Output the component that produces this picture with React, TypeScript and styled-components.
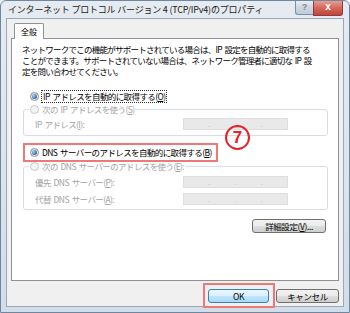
import React from 'react'
import styled, { createGlobalStyle } from 'styled-components'

const jp = `"Noto Sans CJK JP", "Noto Sans", sans-serif`

const GlobalStyle = createGlobalStyle`
  html, body {
    margin: 0;
    padding: 0;
    background: #ffffff;
  }
  body {
    font-family: ${jp};
  }
`

export default function App() {
  return (
    <>
      <GlobalStyle />
      <Window>
        <TitleBar>
          <Title>インターネット プロトコル バージョン 4 (TCP/IPv4)のプロパティ</Title>
          <Caption>
            <HelpButton>?</HelpButton>
            <CloseButton>x</CloseButton>
          </Caption>
        </TitleBar>

        <Client>
          <TabStrip>
            <Tab>全般</Tab>
          </TabStrip>

          <Panel>
            <Desc>
              ネットワークでこの機能がサポートされている場合は、IP 設定を自動的に取得する
              <br />
              ことができます。サポートされていない場合は、ネットワーク管理者に適切な IP 設
              <br />
              定を問い合わせてください。
            </Desc>

            <RadioRow $top={13}>
              <RadioDot $checked />
              <Focus>IP アドレスを自動的に取得する(<u>O</u>)</Focus>
            </RadioRow>

            <Group $top={1}>
              <Legend>
                <RadioRow $top={0} $inLegend $disabled>
                  <RadioDot $disabled />
                  <span>次の IP アドレスを使う(<u>S</u>)</span>
                </RadioRow>
              </Legend>
              <GroupBody $padTop={3} $padBottom={5}>
                <FieldLine>
                  <FieldLabel>IP アドレス(<u>I</u>):</FieldLabel>
                  <IpField>
                    <IpDot>.</IpDot>
                    <IpDot>.</IpDot>
                    <IpDot>.</IpDot>
                  </IpField>
                </FieldLine>
              </GroupBody>
            </Group>

            <RadioRow $top={10}>
              <RadioDot $checked />
              <span>DNS サーバーのアドレスを自動的に取得する(<u>B</u>)</span>
              <Highlight $inset="-3px -6px -4px -7px" />
            </RadioRow>

            <Group $top={2}>
              <Legend>
                <RadioRow $top={0} $inLegend $disabled>
                  <RadioDot $disabled />
                  <span>次の DNS サーバーのアドレスを使う(<u>E</u>):</span>
                </RadioRow>
              </Legend>
              <GroupBody $padTop={4} $padBottom={4}>
                <FieldLine>
                  <FieldLabel>優先 DNS サーバー(<u>P</u>):</FieldLabel>
                  <IpField>
                    <IpDot>.</IpDot>
                    <IpDot>.</IpDot>
                    <IpDot>.</IpDot>
                  </IpField>
                </FieldLine>
                <FieldLine>
                  <FieldLabel>代替 DNS サーバー(<u>A</u>):</FieldLabel>
                  <IpField>
                    <IpDot>.</IpDot>
                    <IpDot>.</IpDot>
                    <IpDot>.</IpDot>
                  </IpField>
                </FieldLine>
              </GroupBody>
            </Group>

            <DetailButton>詳細設定(<u>V</u>)...</DetailButton>

            <StepBadge>7</StepBadge>
          </Panel>

          <ButtonRow>
            <Marked>
              <Button $default $width={61}>OK</Button>
              <Highlight $inset="-6px -6px -5px -5px" />
            </Marked>
            <Button $width={63}>キャンセル</Button>
          </ButtonRow>
        </Client>
      </Window>
    </>
  )
}

const Window = styled.div`
  width: 350px;
  height: 313px;
  box-sizing: border-box;
  display: flex;
  flex-direction: column;
  padding: 0 5px 5px;
  background: linear-gradient(#e6ebf1, #d3dde8);
  border: 1px solid #6f86a0;
  border-radius: 6px 6px 0 0;
  overflow: hidden;
`

const TitleBar = styled.div`
  height: 17px;
  flex-shrink: 0;
  display: flex;
  align-items: flex-start;
`

const Title = styled.div`
  flex: 1;
  padding-left: 2px;
  font-family: ${jp};
  font-size: 9px;
  line-height: 18px;
  letter-spacing: -0.2px;
  color: #1a1a1a;
  white-space: nowrap;
`

const Caption = styled.div`
  display: flex;
  margin-right: 1px;
  margin-top: -1px;
`

const HelpButton = styled.div`
  width: 18px;
  height: 15px;
  box-sizing: border-box;
  border: 1px solid #7d8fa6;
  border-top: none;
  border-right: none;
  border-radius: 0 0 0 3px;
  background: linear-gradient(#eef2f6, #cfd8e2 50%, #c0ccd9);
  color: #7c8796;
  font-family: "Liberation Sans", sans-serif;
  font-weight: bold;
  font-size: 9px;
  line-height: 14px;
  text-align: center;
`

const CloseButton = styled.div`
  width: 30px;
  height: 16px;
  box-sizing: border-box;
  border: 1px solid #8a3d3d;
  border-top: none;
  border-radius: 0 0 3px 0;
  background: linear-gradient(#e9a59a, #d36b5e 50%, #c0443a);
  color: #ffffff;
  font-family: "Liberation Sans", sans-serif;
  font-weight: bold;
  font-size: 10px;
  line-height: 14px;
  text-align: center;
`

const Client = styled.div`
  flex: 1;
  display: flex;
  flex-direction: column;
  background: #f0f0f0;
  border: 1px solid #98a9bc;
  padding: 4px 4px 0;
`

const TabStrip = styled.div`
  display: flex;
  height: 15px;
  padding-left: 3px;
  flex-shrink: 0;
`

const Tab = styled.div`
  height: 16px;
  box-sizing: border-box;
  padding: 0 6px;
  background: #ffffff;
  border: 1px solid #8e9198;
  border-bottom: none;
  border-radius: 2px 2px 0 0;
  font-family: ${jp};
  font-size: 8px;
  line-height: 15px;
  color: #000;
  position: relative;
  z-index: 1;
`

const Panel = styled.div`
  height: 243px;
  flex-shrink: 0;
  box-sizing: border-box;
  position: relative;
  display: flex;
  flex-direction: column;
  padding: 5px 10px 0;
  background: #ffffff;
  border: 1px solid #8e9198;
`

const Desc = styled.p`
  margin: 0;
  font-family: ${jp};
  font-size: 8.5px;
  line-height: 11px;
  letter-spacing: -0.75px;
  word-spacing: 1.5px;
  color: #000;
  white-space: nowrap;
`

const RadioRow = styled.div<{ $top: number; $inLegend?: boolean; $disabled?: boolean }>`
  position: relative;
  display: flex;
  align-items: center;
  gap: 3px;
  width: fit-content;
  height: 12px;
  margin: ${p => p.$top}px 0 0 ${p => (p.$inLegend ? 0 : 8)}px;
  font-family: ${jp};
  font-size: 8.5px;
  letter-spacing: -0.6px;
  word-spacing: 1.5px;
  white-space: nowrap;
  color: ${p => (p.$disabled ? '#a3a3a3' : '#000')};
`

const RadioDot = styled.span<{ $checked?: boolean; $disabled?: boolean }>`
  width: 9px;
  height: 9px;
  box-sizing: border-box;
  flex-shrink: 0;
  border-radius: 50%;
  display: flex;
  align-items: center;
  justify-content: center;
  border: 1px solid ${p => (p.$disabled ? '#c9c9c9' : '#8a8c8e')};
  background: ${p => (p.$disabled ? '#f3f3f3' : 'linear-gradient(135deg, #dcdcdc, #ffffff)')};

  &::after {
    content: '';
    display: ${p => (p.$checked ? 'block' : 'none')};
    width: 5px;
    height: 5px;
    border-radius: 50%;
    background: radial-gradient(circle at 35% 35%, #a6d2f5, #2a64a8 70%);
  }
`

const Focus = styled.span`
  outline: 1px dotted #333;
  outline-offset: 0;
  padding: 0 1px;
  line-height: 11px;
`

const Group = styled.fieldset<{ $top: number }>`
  margin: ${p => p.$top}px 0 0 1px;
  padding: 0;
  min-width: 0;
  border: 1px solid #d5dde5;
  border-radius: 3px;
`

const Legend = styled.legend`
  margin-left: 5px;
  padding: 0 1px;
`

const GroupBody = styled.div<{ $padTop: number; $padBottom: number }>`
  display: flex;
  flex-direction: column;
  gap: 5px;
  padding: ${p => p.$padTop}px 0 ${p => p.$padBottom}px 11px;
`

const FieldLine = styled.div`
  display: flex;
  align-items: center;
  height: 12px;
`

const FieldLabel = styled.span`
  width: 148px;
  flex-shrink: 0;
  font-family: ${jp};
  font-size: 8.5px;
  letter-spacing: -0.6px;
  word-spacing: 1.5px;
  color: #a3a3a3;
  white-space: nowrap;
`

const IpField = styled.div`
  width: 105px;
  height: 12px;
  box-sizing: border-box;
  display: flex;
  align-items: flex-end;
  justify-content: space-evenly;
  background: #e9e9e9;
  border: 1px solid #dedede;
`

const IpDot = styled.span`
  font-family: "Liberation Sans", sans-serif;
  font-size: 8px;
  line-height: 8px;
  color: #b4b4b4;
`

const Highlight = styled.span<{ $inset: string }>`
  position: absolute;
  inset: ${p => p.$inset};
  border: 2px solid #f07878;
  pointer-events: none;
`

const StepBadge = styled.span`
  position: absolute;
  left: 213px;
  top: 86px;
  width: 25px;
  height: 25px;
  box-sizing: border-box;
  border: 2px solid #e8202a;
  border-radius: 50%;
  display: flex;
  align-items: center;
  justify-content: center;
  font-family: "Liberation Sans", sans-serif;
  font-weight: bold;
  font-size: 17px;
  color: #e8202a;
`

const ButtonRow = styled.div`
  display: flex;
  justify-content: flex-end;
  gap: 7px;
  margin-top: 8px;
`

const Marked = styled.div`
  position: relative;
  display: flex;
`

const Button = styled.div<{ $default?: boolean; $width: number }>`
  width: ${p => p.$width}px;
  height: 14px;
  box-sizing: border-box;
  display: flex;
  align-items: center;
  justify-content: center;
  border-radius: 3px;
  border: 1px solid ${p => (p.$default ? '#3c7fb1' : '#707070')};
  background: ${p =>
    p.$default
      ? 'linear-gradient(#eaf6fd, #d9f0fc 50%, #bee6fd 51%, #a7d9f5)'
      : 'linear-gradient(#f2f2f2, #ebebeb 50%, #dddddd 51%, #cfcfcf)'};
  font-family: ${jp};
  font-size: 8.5px;
  letter-spacing: -0.4px;
  color: #000;
  white-space: nowrap;
`

const DetailButton = styled(Button).attrs({ $width: 74 })`
  align-self: flex-end;
  margin: 9px 2px 0 0;
`
